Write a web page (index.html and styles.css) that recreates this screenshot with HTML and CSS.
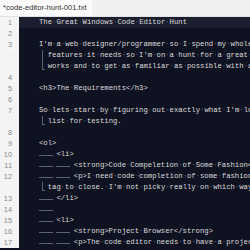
FILE: index.html
```html
<!DOCTYPE html>
<html>
<head>
<meta charset="utf-8">
<link rel="stylesheet" href="styles.css">
</head>
<body>
<div class="tabbar"><div class="tab">*code-editor-hunt-001.txt</div></div>
<div class="editor">
  <div class="row cur"><span class="ln">1</span><span class="code"><b>The</b>·<b>Great</b>·<b>Windows</b>·<b>Code</b>·<b>Editor</b>·<b>Hunt</b></span></div>
  <div class="row"><span class="ln">2</span><span class="code"></span></div>
  <div class="row"><span class="ln">3</span><span class="code"><b>I'm</b>·<b>a</b>·<b>web</b>·<b>designer/programmer</b>·<b>so</b>·<b>I</b>·<b>spend</b>·<b>my</b>·<b>whole</b>·<b>day</b></span></div>
  <div class="row"><span class="ln dot">·</span><span class="code"><span class="wr"></span><b>features</b>·<b>it</b>·<b>needs</b>·<b>so</b>·<b>I'm</b>·<b>on</b>·<b>a</b>·<b>hunt</b>·<b>for</b>·<b>a</b>·<b>great</b>·<b>code</b></span></div>
  <div class="row"><span class="ln dot">·</span><span class="code"><span class="wr end"></span><b>works</b>·<b>and</b>·<b>to</b>·<b>get</b>·<b>as</b>·<b>familiar</b>·<b>as</b>·<b>possible</b>·<b>with</b>·<b>a</b></span></div>
  <div class="row"><span class="ln">4</span><span class="code"></span></div>
  <div class="row"><span class="ln">5</span><span class="code"><b>&lt;h3&gt;The</b>·<b>Requirements&lt;/h3&gt;</b></span></div>
  <div class="row"><span class="ln">6</span><span class="code"></span></div>
  <div class="row"><span class="ln">7</span><span class="code"><b>So</b>·<b>lets</b>·<b>start</b>·<b>by</b>·<b>figuring</b>·<b>out</b>·<b>exactly</b>·<b>what</b>·<b>I'm</b>·<b>looking</b></span></div>
  <div class="row"><span class="ln dot">·</span><span class="code"><span class="wr end"></span><b>list</b>·<b>for</b>·<b>testing.</b></span></div>
  <div class="row"><span class="ln">8</span><span class="code"></span></div>
  <div class="row"><span class="ln">9</span><span class="code"><b>&lt;ol&gt;</b></span></div>
  <div class="row"><span class="ln">10</span><span class="code"><span class="tb"></span><b>&lt;li&gt;</b></span></div>
  <div class="row"><span class="ln">11</span><span class="code"><span class="tb"></span><span class="tb"></span><b>&lt;strong&gt;Code</b>·<b>Compeletion</b>·<b>of</b>·<b>Some</b>·<b>Fashion&lt;/strong&gt;</b></span></div>
  <div class="row"><span class="ln">12</span><span class="code"><span class="tb"></span><span class="tb"></span><b>&lt;p&gt;I</b>·<b>need</b>·<b>code</b>·<b>completion</b>·<b>of</b>·<b>some</b>·<b>fashion</b></span></div>
  <div class="row"><span class="ln dot">·</span><span class="code"><span class="wr end"></span><b>tag</b>·<b>to</b>·<b>close.</b>·<b>I'm</b>·<b>not</b>·<b>picky</b>·<b>really</b>·<b>on</b>·<b>which</b>·<b>way</b></span></div>
  <div class="row"><span class="ln">13</span><span class="code"><span class="tb"></span><b>&lt;/li&gt;</b></span></div>
  <div class="row"><span class="ln">14</span><span class="code"><span class="tb"></span></span></div>
  <div class="row"><span class="ln">15</span><span class="code"><span class="tb"></span><b>&lt;li&gt;</b></span></div>
  <div class="row"><span class="ln">16</span><span class="code"><span class="tb"></span><span class="tb"></span><b>&lt;strong&gt;Project</b>·<b>Browser&lt;/strong&gt;</b></span></div>
  <div class="row"><span class="ln">17</span><span class="code"><span class="tb"></span><span class="tb"></span><b>&lt;p&gt;The</b>·<b>code</b>·<b>editor</b>·<b>needs</b>·<b>to</b>·<b>have</b>·<b>a</b>·<b>project</b></span></div>
</div>
</body>
</html>
```
FILE: styles.css
```css
html, body {
  margin: 0;
  padding: 0;
}
body {
  width: 250px;
  height: 250px;
  overflow: hidden;
  background: #0f1221;
}
.tabbar {
  display: flex;
  height: 16px;
  background: #f0f0f0;
  border-bottom: 1px solid #e2e2e2;
}
.tab {
  background: #fafafa;
  padding: 0 5px 0 3px;
  font-family: "Liberation Sans", Arial, sans-serif;
  font-size: 7.6px;
  line-height: 16px;
  color: #333;
}
.editor {
  font-family: "Liberation Mono", monospace;
  font-size: 7.25px;
  line-height: 11px;
}
.row {
  display: flex;
  height: 11px;
}
.ln {
  flex: none;
  width: 19px;
  box-sizing: border-box;
  padding-right: 7px;
  text-align: right;
  background: #f4f4f4;
  color: #8a8a8a;
  font-family: "Liberation Sans", Arial, sans-serif;
  font-size: 7.4px;
}
.ln.dot {
  color: #b5b5b5;
}
.code {
  flex: 1;
  min-width: 0;
  padding-left: 20px;
  white-space: pre;
  overflow: hidden;
  color: #5b6274;
}
.row.cur .code {
  background: #1a1e2f;
}
.code b {
  font-weight: normal;
  color: #dcdcdc;
}
.tb {
  display: inline-block;
  width: 4ch;
  height: 11px;
  vertical-align: top;
  background: linear-gradient(#5b6274, #5b6274) no-repeat 0 6px / 14px 1px;
}
.wr {
  display: inline-block;
  width: 2ch;
  height: 11px;
  vertical-align: top;
  background: linear-gradient(#5b6274, #5b6274) no-repeat 3px 0 / 1px 11px;
}
.wr.end {
  background:
    linear-gradient(#5b6274, #5b6274) no-repeat 3px 0 / 1px 9px,
    linear-gradient(#5b6274, #5b6274) no-repeat 3px 8px / 3px 1px;
}
```
